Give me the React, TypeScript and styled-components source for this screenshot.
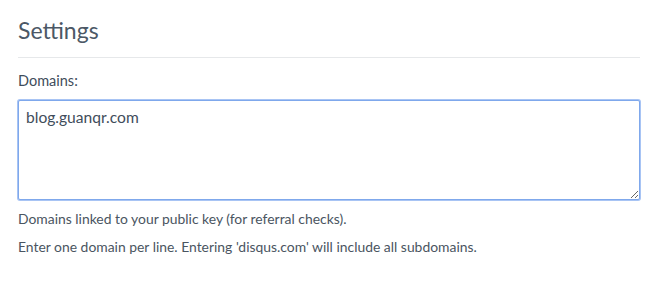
import React, { useEffect, useRef } from "react";
import styled, { createGlobalStyle } from "styled-components";

const Global = createGlobalStyle`
  html, body { margin: 0; padding: 0; background: #fff; }
  body { font-family: Lato, "Noto Sans", sans-serif; }
`;

const Page = styled.div`
  padding: 14px 24px 0 18px;
  width: 664px;
  box-sizing: border-box;
`;

const Title = styled.h2`
  margin: 0;
  font-size: 23px;
  font-weight: 400;
  line-height: 32px;
  color: #4c5866;
  padding-bottom: 11px;
  border-bottom: 1px solid #e6e8ea;
`;

const Field = styled.div`
  display: flex;
  flex-direction: column;
  margin-top: 14px;
`;

const Label = styled.label`
  font-size: 14.5px;
  line-height: 18px;
  color: #3f4d5b;
  margin-bottom: 10px;
`;

const TextArea = styled.textarea`
  box-sizing: border-box;
  width: 622px;
  height: 100px;
  margin: 0;
  padding: 5px 7px;
  font-family: Lato, "Noto Sans", sans-serif;
  font-size: 15.6px;
  line-height: 22px;
  color: #3f4d5b;
  caret-color: #222;
  border: 1px solid #7fa8ec;
  box-shadow: 0 0 0 1px #a8c4f4;
  border-radius: 2px;
  outline: none;
  resize: vertical;
`;

const Help = styled.p`
  margin: 10px 0 0;
  font-size: 13.9px;
  line-height: 18px;
  color: #4a5561;
`;

export default function App() {
  const ref = useRef<HTMLTextAreaElement>(null);
  useEffect(() => {
    const el = ref.current;
    if (el) {
      el.focus();
      const n = el.value.length;
      el.setSelectionRange(n, n);
    }
  }, []);
  return (
    <>
      <Global />
      <Page>
        <Title>Settings</Title>
        <Field>
          <Label>Domains:</Label>
          <TextArea ref={ref} defaultValue="blog.guanqr.com" />
          <Help>Domains linked to your public key (for referral checks).</Help>
          <Help>Enter one domain per line. Entering 'disqus.com' will include all subdomains.</Help>
        </Field>
      </Page>
    </>
  );
}
